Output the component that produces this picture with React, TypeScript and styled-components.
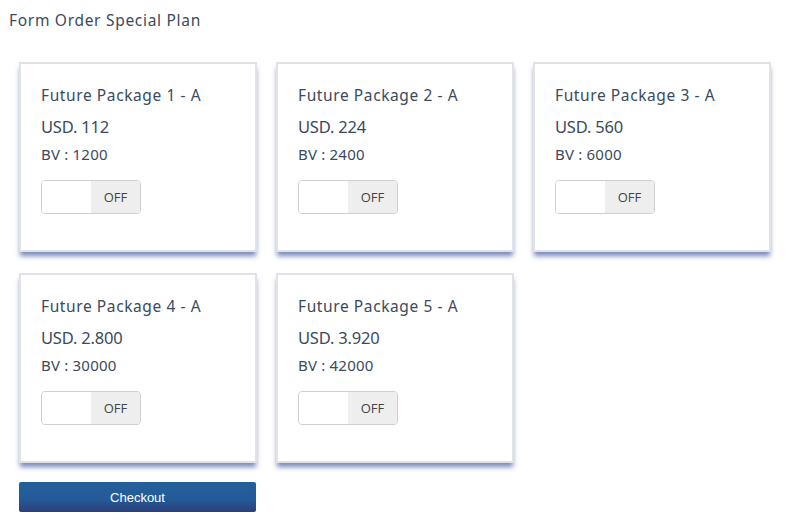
import styled, { createGlobalStyle } from "styled-components";

const GlobalStyle = createGlobalStyle`
  body {
    margin: 0;
    background: #fff;
    font-family: "Noto Sans", "Open Sans", sans-serif;
    color: #3b4a5c;
  }
`;

const Page = styled.div`
  padding: 10px 9px 20px 9px;
`;

const Heading = styled.h1`
  margin: 0;
  font-size: 15.5px;
  font-weight: 400;
  letter-spacing: 0.7px;
  line-height: 20px;
  color: #3b4a5c;
`;

const Grid = styled.div`
  display: grid;
  grid-template-columns: repeat(3, 238px);
  column-gap: 19px;
  row-gap: 21px;
  margin: 32px 0 0 10px;
`;

const Card = styled.div`
  height: 190px;
  box-sizing: border-box;
  border: 2px solid #e2e2e4;
  background: #fff;
  padding: 19px 20px;
  box-shadow: 0 5px 5px -1px rgba(48, 72, 150, 0.65);
`;

const PackageName = styled.div`
  font-size: 15.5px;
  letter-spacing: 0.6px;
  line-height: 24px;
  margin-bottom: 8px;
`;

const Price = styled.div`
  font-size: 16.5px;
  letter-spacing: -0.2px;
  line-height: 24px;
  margin-bottom: 4px;
`;

const Bv = styled.div`
  font-size: 15px;
  letter-spacing: 0.2px;
  line-height: 22px;
  margin-bottom: 15px;
`;

const Toggle = styled.div`
  display: flex;
  width: 100px;
  height: 34px;
  box-sizing: border-box;
  border: 1px solid #cfcfcf;
  border-radius: 4px;
  overflow: hidden;
`;

const ToggleHandle = styled.div`
  flex: 1;
  background: #fff;
`;

const ToggleLabel = styled.div`
  width: 49px;
  background: #eeeeee;
  display: flex;
  align-items: center;
  justify-content: center;
  font-family: "Open Sans", sans-serif;
  font-size: 13px;
  color: #444;
`;

const CheckoutButton = styled.button`
  display: block;
  margin: 19px 0 0 10px;
  width: 237px;
  height: 30px;
  border: none;
  border-radius: 2px;
  background: linear-gradient(to bottom, #245f9c 0%, #235b98 55%, #2a3f7c 100%);
  color: #fff;
  font-family: "Liberation Sans", Arial, sans-serif;
  font-size: 13px;
  cursor: pointer;
`;

const packages = [
  { name: "Future Package 1 - A", price: "112", bv: "1200" },
  { name: "Future Package 2 - A", price: "224", bv: "2400" },
  { name: "Future Package 3 - A", price: "560", bv: "6000" },
  { name: "Future Package 4 - A", price: "2.800", bv: "30000" },
  { name: "Future Package 5 - A", price: "3.920", bv: "42000" },
];

export default function App() {
  return (
    <>
      <GlobalStyle />
      <Page>
        <Heading>Form Order Special Plan</Heading>
        <Grid>
          {packages.map((p) => (
            <Card key={p.name}>
              <PackageName>{p.name}</PackageName>
              <Price>USD. {p.price}</Price>
              <Bv>BV : {p.bv}</Bv>
              <Toggle>
                <ToggleHandle />
                <ToggleLabel>OFF</ToggleLabel>
              </Toggle>
            </Card>
          ))}
        </Grid>
        <CheckoutButton>Checkout</CheckoutButton>
      </Page>
    </>
  );
}
